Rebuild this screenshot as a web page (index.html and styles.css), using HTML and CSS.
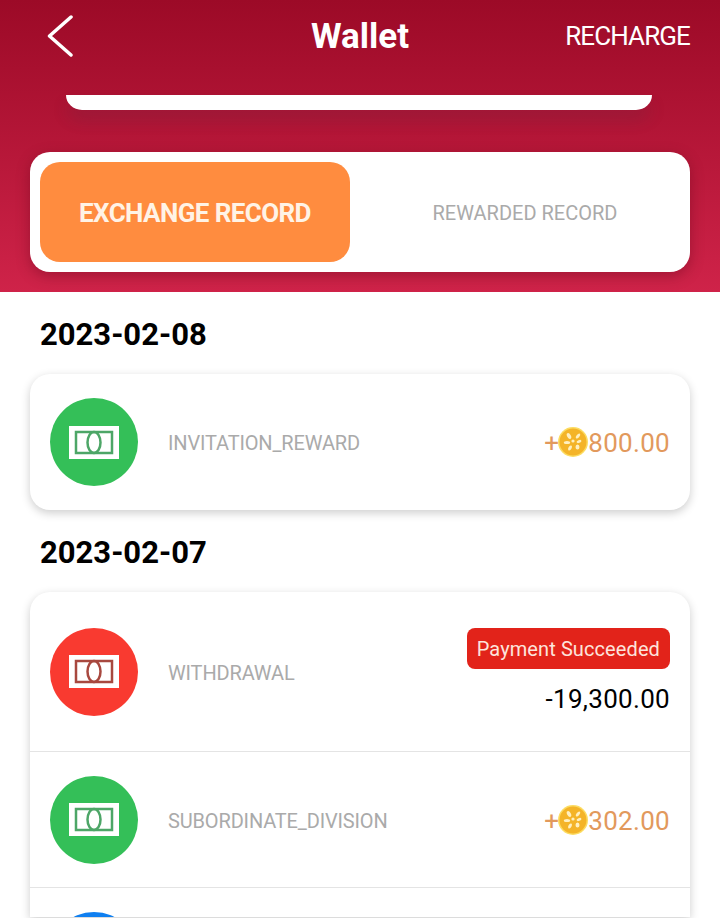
FILE: index.html
```html
<!DOCTYPE html>
<html lang="en">
<head>
  <meta charset="UTF-8">
  <title>Wallet</title>
  <link rel="stylesheet" href="styles.css">
</head>
<body>
  <svg class="icon-defs" width="0" height="0">
    <symbol id="cash" viewBox="0 0 50 33">
      <rect width="50" height="33" fill="#fff"/>
      <rect x="7" y="6" width="36" height="21" fill="none" stroke="currentColor" stroke-width="2.500"/>
      <ellipse cx="25" cy="16.500" rx="6.500" ry="10.500" fill="none" stroke="currentColor" stroke-width="2.500"/>
    </symbol>
    <symbol id="coin" viewBox="0 0 30 30">
      <circle cx="15" cy="15" r="15" fill="#fcdc62"/>
      <circle cx="15" cy="15" r="13.500" fill="#f4b428"/>
      <g fill="#fff0c0">
        <ellipse cx="11" cy="9" rx="1.800" ry="3.200" transform="rotate(-30 11 9)"/>
        <ellipse cx="20" cy="9" rx="1.500" ry="3" transform="rotate(40 20 9)"/>
        <ellipse cx="9" cy="15.500" rx="3.200" ry="1.600"/>
        <ellipse cx="21" cy="14.500" rx="2.500" ry="1.400" transform="rotate(-20 21 14.500)"/>
        <ellipse cx="12" cy="21" rx="1.600" ry="2.800" transform="rotate(30 12 21)"/>
        <ellipse cx="19.500" cy="20" rx="2" ry="2.500"/>
        <circle cx="15" cy="14" r="1.600"/>
      </g>
    </symbol>
  </svg>

  <div class="page">
    <div class="top">
      <div class="navbar">
        <svg class="back" width="26" height="44" viewBox="0 0 26 44">
          <path d="M24 3 2.500 22 24 41" fill="none" stroke="#fff" stroke-width="3.500" stroke-linecap="round" stroke-linejoin="round"/>
        </svg>
        <div class="title">Wallet</div>
        <div class="recharge">RECHARGE</div>
      </div>
      <div class="balance-strip"></div>
      <div class="tabs">
        <div class="tab active">EXCHANGE RECORD</div>
        <div class="tab other">REWARDED RECORD</div>
      </div>
    </div>

    <div class="records">
      <div class="date">2023-02-08</div>
      <div class="card">
        <div class="row">
          <div class="dot green"><svg class="cash"><use href="#cash"/></svg></div>
          <div class="label">INVITATION_REWARD</div>
          <div class="amount plus">+<svg class="coin"><use href="#coin"/></svg>800.00</div>
        </div>
      </div>

      <div class="date">2023-02-07</div>
      <div class="card open">
        <div class="row tall">
          <div class="dot red"><svg class="cash"><use href="#cash"/></svg></div>
          <div class="label">WITHDRAWAL</div>
          <div class="right">
            <div class="status">Payment Succeeded</div>
            <div class="amount">-19,300.00</div>
          </div>
        </div>
        <div class="row">
          <div class="dot green"><svg class="cash"><use href="#cash"/></svg></div>
          <div class="label">SUBORDINATE_DIVISION</div>
          <div class="amount plus">+<svg class="coin"><use href="#coin"/></svg>302.00</div>
        </div>
        <div class="row cut">
          <div class="dot blue"></div>
        </div>
      </div>
    </div>
  </div>
</body>
</html>
```

FILE: styles.css
```css
html, body {
  margin: 0;
  height: 918px;
  overflow: hidden;
}

body {
  font-family: Roboto, 'Liberation Sans', sans-serif;
  background: #fff;
  color: #000;
}

.icon-defs {
  display: block;
  height: 0;
}

.page {
  width: 720px;
}

.top {
  height: 292px;
  box-sizing: border-box;
  background: linear-gradient(180deg, #9c0a27 0%, #cf2349 100%);
  padding: 0 30px;
}

.navbar {
  display: flex;
  align-items: center;
  justify-content: space-between;
  height: 72px;
  position: relative;
}

.back {
  margin-left: 17px;
}

.title {
  position: absolute;
  left: 0;
  right: 0;
  text-align: center;
  font-size: 35px;
  font-weight: 700;
  color: #fff;
}

.recharge {
  font-size: 26px;
  color: #fff;
  letter-spacing: -0.9px;
}

.balance-strip {
  height: 15px;
  margin: 23px 38px 0 36px;
  background: #fff;
  border-radius: 0 0 16px 16px / 0 0 15px 15px;
  box-shadow: 0 10px 16px rgba(70, 50, 70, 0.2);
}

.tabs {
  display: flex;
  margin-top: 42px;
  height: 120px;
  box-sizing: border-box;
  padding: 10px;
  background: #fff;
  border-radius: 20px;
  box-shadow: 0 4px 14px rgba(80, 0, 20, 0.35);
}

.tab {
  display: flex;
  align-items: center;
  justify-content: center;
  padding-top: 2px;
  box-sizing: border-box;
  font-size: 20px;
  color: #aaa;
  border-radius: 20px;
}

.tab.active {
  flex: 0 0 310px;
  background: #ff8c3f;
  color: #fff3e6;
  font-size: 26px;
  font-weight: 700;
  letter-spacing: -0.6px;
}

.tab.other {
  flex: 1;
  padding-left: 20px;
}

.records {
  padding: 0 30px;
}

.date {
  font-size: 31px;
  font-weight: 700;
  line-height: 36px;
  padding: 25px 10px 21px;
}

.card {
  background: #fff;
  border-radius: 20px;
  box-shadow: 0 3px 10px rgba(0, 0, 0, 0.2);
}

.card.open {
  border-radius: 20px 20px 0 0;
}

.row {
  display: flex;
  align-items: center;
  height: 136px;
  box-sizing: border-box;
  padding: 0 20px;
  border-top: 1px solid #e4e4e4;
}

.row:first-child {
  border-top: 0;
}

.row.tall {
  height: 159px;
}

/* last row is cut by the bottom of the screen */
.row.cut {
  height: 30px;
  align-items: flex-start;
  padding-top: 24px;
  overflow: hidden;
}

.dot {
  width: 88px;
  height: 88px;
  border-radius: 50%;
  display: flex;
  align-items: center;
  justify-content: center;
  flex-shrink: 0;
}

.green {
  background: #34bf58;
  color: #4da667;
}

.red {
  background: #f93a30;
  color: #a8483f;
}

.blue {
  background: #0f7ff0;
}

.cash {
  width: 50px;
  height: 33px;
}

.label {
  flex: 1;
  margin: 2px 0 0 30px;
  font-size: 20px;
  letter-spacing: -0.15px;
  color: #aaa;
}

.amount {
  display: flex;
  align-items: center;
  font-size: 26px;
  letter-spacing: 0.3px;
  color: #000;
}

.amount.plus {
  margin-top: 2px;
  color: #e2995c;
}

.coin {
  width: 30px;
  height: 30px;
  margin: -2px 0 0 -1px;
}

.right {
  display: flex;
  flex-direction: column;
  align-items: flex-end;
  gap: 15px;
  padding-bottom: 2px;
}

.status {
  background: #e2231a;
  color: #fde3dc;
  font-size: 20px;
  line-height: 40px;
  padding: 1px 10px 0;
  border-radius: 8px;
  letter-spacing: 0.1px;
}
```
